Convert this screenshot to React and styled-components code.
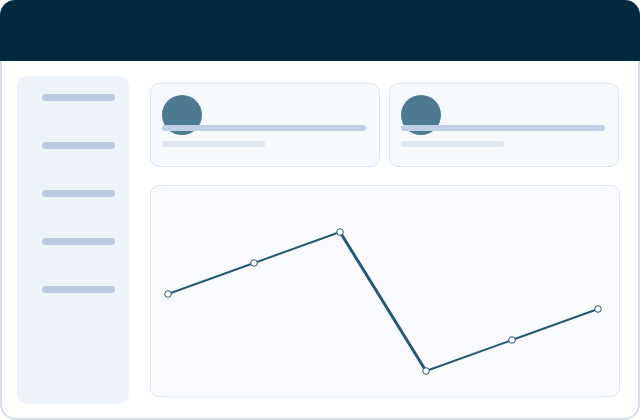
import React from "react";
import styled, { createGlobalStyle } from "styled-components";

const GlobalStyle = createGlobalStyle`
  html, body {
    margin: 0;
    padding: 0;
    background: #ffffff;
    font-family: "Liberation Sans", Arial, sans-serif;
  }
  * {
    box-sizing: border-box;
  }
`;

// chart points, in the card's inner coordinates
const points = [
  [17, 108],
  [103, 77],
  [189, 46],
  [275, 185],
  [361, 154],
  [447, 123],
];

const App = () => {
  return (
    <>
      <GlobalStyle />
      <Frame>
        <Header />
        <Body>
          <Sidebar>
            {[0, 1, 2, 3, 4].map((i) => (
              <NavBar key={i} />
            ))}
          </Sidebar>
          <Main>
            <Cards>
              {[0, 1].map((i) => (
                <StatCard key={i}>
                  <Avatar />
                  <Line $width="204px" $color="#bfcfe5" $lift />
                  <Line $width="103px" $color="#dfe7f3" />
                </StatCard>
              ))}
            </Cards>
            <ChartCard>
              <svg width="468" height="210" viewBox="0 0 468 210">
                {points.slice(1).map(([x, y], i) => (
                  <line
                    key={i}
                    x1={points[i][0]}
                    y1={points[i][1]}
                    x2={x}
                    y2={y}
                    stroke="#255a72"
                    strokeWidth={i === 2 ? 3 : 2}
                    strokeLinecap="round"
                  />
                ))}
                {points.map(([x, y], i) => (
                  <circle
                    key={i}
                    cx={x}
                    cy={y}
                    r="3.3"
                    fill="#ffffff"
                    stroke="#255a72"
                    strokeWidth="1"
                  />
                ))}
              </svg>
            </ChartCard>
          </Main>
        </Body>
      </Frame>
    </>
  );
};

const Frame = styled.div`
  width: 640px;
  height: 420px;
  display: flex;
  flex-direction: column;
`;

const Header = styled.div`
  height: 61px;
  flex-shrink: 0;
  background: #022a3f;
  border-radius: 15px 15px 0 0;
`;

const Body = styled.div`
  flex: 1;
  display: grid;
  grid-template-columns: 112px 1fr;
  column-gap: 21px;
  padding: 15px 18px 14px 15px;
  background: #ffffff;
  border: 2px solid #d5dfeb;
  border-top: none;
  border-radius: 0 0 16px 16px;
`;

const Sidebar = styled.div`
  display: flex;
  flex-direction: column;
  gap: 41px;
  padding: 18px 14px 0 25px;
  background: #eef3fa;
  border-radius: 10px;
`;

const NavBar = styled.div`
  width: 73px;
  height: 7px;
  border-radius: 4px;
  background: #bccbe2;
`;

const Main = styled.div`
  display: flex;
  flex-direction: column;
  gap: 18px;
  padding: 7px 0 7px 0;
`;

const Cards = styled.div`
  display: grid;
  grid-template-columns: 230px 230px;
  column-gap: 9px;
  height: 84px;
`;

const StatCard = styled.div`
  padding: 11px 13px 0 11px;
  background: #f6f9fe;
  border: 1px solid #dde6f2;
  border-radius: 9px;
`;

const Avatar = styled.div`
  width: 40px;
  height: 40px;
  border-radius: 50%;
  background: #4d7a91;
`;

const Line = styled.div`
  position: relative;
  width: ${(p) => p.$width};
  height: 6px;
  border-radius: 3px;
  background: ${(p) => p.$color};
  margin-top: ${(p) => (p.$lift ? "-10px" : "10px")};
`;

const ChartCard = styled.div`
  flex: 1;
  background: #f9fbff;
  border: 1px solid #dde6f2;
  border-radius: 9px;
  overflow: hidden;

  svg {
    display: block;
  }
`;

export default App;
